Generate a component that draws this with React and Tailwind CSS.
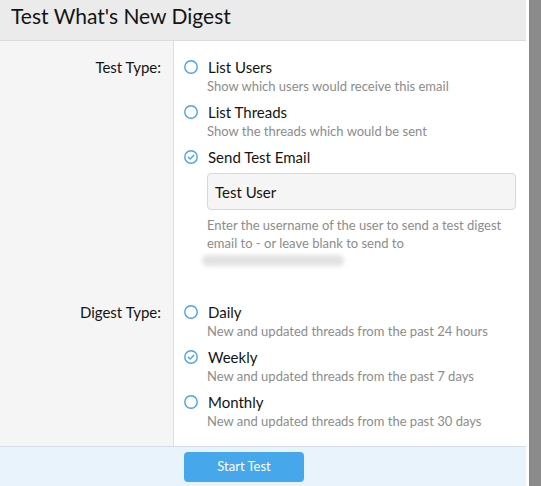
import React, { useState } from 'react';

const FONT = { fontFamily: 'Lato, "Noto Sans", Arial, sans-serif' };

function Radio({ checked }) {
  return (
    <svg width="14" height="14" viewBox="0 0 14 14" className="shrink-0">
      <circle cx="7" cy="7" r="6.2" fill="none" stroke="#4aa3e4" strokeWidth="1.4" />
      {checked && (
        <path d="M4.3 7.2 L6.2 9.1 L9.8 5.2" fill="none" stroke="#4aa3e4" strokeWidth="1.4"
              strokeLinecap="round" strokeLinejoin="round" />
      )}
    </svg>
  );
}

function Option({ label, hint, checked, onClick, children }) {
  return (
    <div>
      <button onClick={onClick} className="flex items-center gap-[10px] h-[20px] text-[15px] text-[#141414] leading-[20px]">
        <Radio checked={checked} />
        <span>{label}</span>
      </button>
      {hint && <p className="pl-[23px] text-[13px] leading-[19px] text-[#8c8c8c]">{hint}</p>}
      {children}
    </div>
  );
}

function Row({ label, className, children }) {
  return (
    <div className="flex">
      <div className={`w-[174px] shrink-0 bg-[#f5f5f5] border-r border-[#dedede] text-right pr-[12px] text-[15px] leading-[20px] text-[#141414] ${className}`}>
        {label}
      </div>
      <div className={`flex-1 pl-[10px] pr-[10px] flex flex-col gap-[6px] ${className}`}>
        {children}
      </div>
    </div>
  );
}

export default function App() {
  const [testType, setTestType] = useState('email');
  const [digest, setDigest] = useState('weekly');
  const [user, setUser] = useState('Test User');

  return (
    <div className="flex h-[486px] bg-white overflow-hidden" style={FONT}>
      <div className="w-[526px] shrink-0 flex flex-col">
        {/* Title */}
        <div className="h-[41px] shrink-0 bg-[#ebebeb] border-b border-[#dcdcdc] pl-[11px]">
          <h1 className="text-[21px] leading-[32px] text-[#141414]">Test What's New Digest</h1>
        </div>

        <Row label="Test Type:" className="pt-[16px] pb-[16px]">
          <Option label="List Users" hint="Show which users would receive this email"
                  checked={testType==='users'} onClick={()=>setTestType('users')} />
          <Option label="List Threads" hint="Show the threads which would be sent"
                  checked={testType==='threads'} onClick={()=>setTestType('threads')} />
          <Option label="Send Test Email" checked={testType==='email'} onClick={()=>setTestType('email')}>
            <div className="pl-[23px] mt-[6px]">
              <input value={user} onChange={e=>setUser(e.target.value)}
                     className="w-full h-[37px] px-[7px] rounded-[4px] border border-[#d8d8d8] bg-[#f5f5f5] text-[15px] text-[#141414] outline-none" />
              <p className="mt-[7px] text-[13px] leading-[17.5px] text-[#8c8c8c]">
                Enter the username of the user to send a test digest email to - or leave blank to send to
              </p>
              <div className="h-[17.5px] flex items-center -ml-[5px]">
                <span className="block w-[142px] h-[11px] rounded-full bg-[#e2e2e2] blur-[2px]"></span>
              </div>
            </div>
          </Option>
        </Row>

        <Row label="Digest Type:" className="pt-[16px] pb-[15px]">
          <Option label="Daily" hint="New and updated threads from the past 24 hours"
                  checked={digest==='daily'} onClick={()=>setDigest('daily')} />
          <Option label="Weekly" hint="New and updated threads from the past 7 days"
                  checked={digest==='weekly'} onClick={()=>setDigest('weekly')} />
          <Option label="Monthly" hint="New and updated threads from the past 30 days"
                  checked={digest==='monthly'} onClick={()=>setDigest('monthly')} />
        </Row>

        {/* Footer */}
        <div className="flex-1 bg-[#e9f3fc] border-t border-[#d6dde4] pt-[5px] pl-[184px]">
          <button className="w-[120px] h-[30px] rounded-[4px] bg-[#47a7eb] text-white text-[13px]">
            Start Test
          </button>
        </div>
      </div>
      <div className="w-[3px] shrink-0 bg-white" />
      <div className="w-[12px] shrink-0 bg-[#8b8b8b]" />
    </div>
  );
}
